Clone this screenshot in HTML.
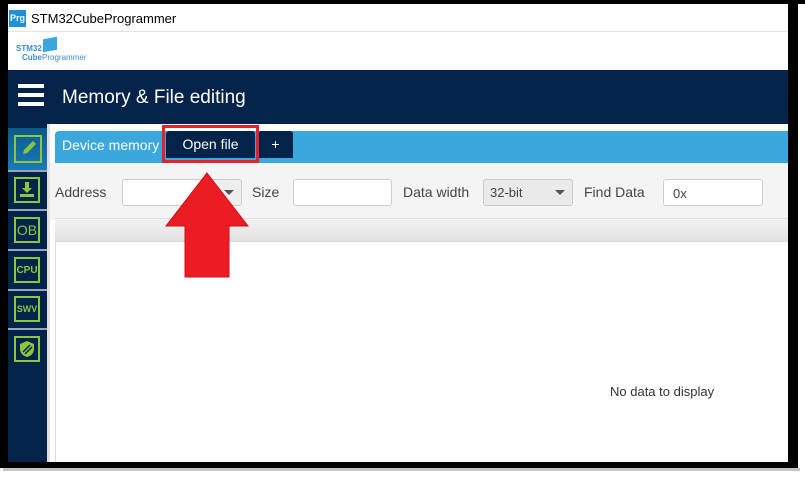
<!DOCTYPE html>
<html><head><style>
*{margin:0;padding:0;box-sizing:border-box}
body{width:805px;height:477px;background:#fff;position:relative;overflow:hidden;font-family:"Liberation Sans",sans-serif}
.a{position:absolute}
.ic{position:absolute;left:14px;width:26px;height:26px;border:2px solid #8cc63f;color:#8cc63f;font-weight:bold;font-size:12px;display:flex;align-items:center;justify-content:center}
.sep{position:absolute;left:8px;width:39px;height:2px;background:#9aa6b8}
.lbl{position:absolute;font-size:14px;color:#444}
.inp{position:absolute;background:#fff;border:1px solid #ccc;border-radius:3px;height:27px}
</style></head><body>
<div class="a" style="left:0;top:0;width:805px;height:4px;background:#000"></div>
<div class="a" style="left:0;top:0;width:8px;height:468px;background:#000"></div>
<div class="a" style="left:788px;top:0;width:10px;height:468px;background:#000"></div>
<div class="a" style="left:0;top:462px;width:798px;height:6px;background:#000"></div>
<div class="a" style="left:3px;top:468px;width:797px;height:3px;background:#888;opacity:.5"></div>
<!-- title bar -->
<div class="a" style="left:9px;top:10px;width:17px;height:17px;background:#1e90d6;color:#fff;font-size:9px;font-weight:bold;line-height:17px;text-align:center">Prg</div>
<div class="a" style="left:31px;top:11px;font-size:13px;color:#000">STM32CubeProgrammer</div>
<div class="a" style="left:8px;top:31px;width:780px;height:1px;background:#e4e4e4"></div>
<div class="a" style="left:16px;top:44px;font-size:8px;color:#3a8fd0;font-weight:bold">STM32</div>
<div class="a" style="left:43px;top:38px;width:14px;height:13px;background:#3aa8dc;transform:skewY(-10deg)"></div>
<div class="a" style="left:22px;top:53px;font-size:8px;color:#3a8fd0"><b>Cube</b>Programmer</div>
<!-- header -->
<div class="a" style="left:8px;top:70px;width:780px;height:54px;background:#03234b"></div>
<div class="a" style="left:18px;top:84px;width:26px;height:4px;background:#fff"></div>
<div class="a" style="left:18px;top:93px;width:26px;height:4px;background:#fff"></div>
<div class="a" style="left:18px;top:102px;width:26px;height:4px;background:#fff"></div>
<div class="a" style="left:62px;top:87px;font-size:19px;color:#fff">Memory &amp; File editing</div>
<!-- sidebar -->
<div class="a" style="left:8px;top:124px;width:39px;height:338px;background:#03234b"></div>
<div class="a" style="left:8px;top:128px;width:39px;height:42px;background:linear-gradient(#0a5a8c,#1a7ab6)"></div>
<div class="ic" style="top:135px;width:28px;height:28px"><svg width="20" height="20" viewBox="0 0 20 20"><path d="M5 15 L6 11 L15 2 L18 5 L9 14 Z" fill="#8cc63f"/></svg></div>
<div class="sep" style="top:170px"></div>
<div class="ic" style="top:177px"><svg width="18" height="18" viewBox="0 0 18 18"><path d="M7 1h4v6h3l-5 5-5-5h3z M2 13h14v3H2z" fill="#8cc63f"/></svg></div>
<div class="sep" style="top:209px"></div>
<div class="ic" style="top:217px;font-size:14px;font-weight:normal">OB</div>
<div class="sep" style="top:249px"></div>
<div class="ic" style="top:257px;font-size:10px">CPU</div>
<div class="sep" style="top:289px"></div>
<div class="ic" style="top:296px;font-size:9px">SWV</div>
<div class="sep" style="top:328px"></div>
<div class="ic" style="top:336px"><svg width="18" height="18" viewBox="0 0 18 18"><path d="M9 1 L16 4 V9 C16 13 13 16 9 17 C5 16 2 13 2 9 V4 Z" fill="#8cc63f"/><path d="M5 12 L12 5 M7 14 L14 7" stroke="#03234b" stroke-width="1.5"/></svg></div>
<!-- content -->
<div class="a" style="left:47px;top:124px;width:3px;height:338px;background:#e0e0e0"></div>
<div class="a" style="left:55px;top:131px;width:733px;height:32px;background:#3aa8dc;border-radius:4px 0 0 0"></div>
<div class="a" style="left:55px;top:157px;width:733px;height:6px;background:#3aa8dc"></div>
<div class="a" style="left:62px;top:137px;font-size:14px;color:#fff">Device memory</div>
<div class="a" style="left:166px;top:131px;width:89px;height:27px;background:#03234b;border-radius:3px 3px 0 0;color:#fff;font-size:14px;text-align:center;line-height:27px">Open file</div>
<div class="a" style="left:258px;top:131px;width:35px;height:27px;background:#03234b;border-radius:3px 3px 0 0;color:#fff;font-size:14px;text-align:center;line-height:27px">+</div>
<div class="a" style="left:162px;top:125px;width:97px;height:38px;border:3px solid #e8202a"></div>
<div class="a" style="left:50px;top:163px;width:738px;height:57px;background:#f4f4f4"></div>
<div class="lbl" style="left:55px;top:184px">Address</div>
<div class="inp" style="left:122px;top:179px;width:120px;background:linear-gradient(90deg,#fff 70%,#eee 70%)"></div>
<div class="a" style="left:224px;top:190px;border:5px solid transparent;border-top:5px solid #555"></div>
<div class="lbl" style="left:252px;top:184px">Size</div>
<div class="inp" style="left:293px;top:179px;width:99px"></div>
<div class="lbl" style="left:403px;top:184px">Data width</div>
<div class="inp" style="left:483px;top:179px;width:90px;background:#eaeaea"></div>
<div class="lbl" style="left:490px;top:185px;font-size:13px">32-bit</div>
<div class="a" style="left:555px;top:190px;border:5px solid transparent;border-top:5px solid #555"></div>
<div class="lbl" style="left:584px;top:184px">Find Data</div>
<div class="inp" style="left:663px;top:179px;width:100px"></div>
<div class="lbl" style="left:673px;top:186px;font-size:13px">0x</div>
<div class="a" style="left:55px;top:218px;width:733px;height:24px;background:linear-gradient(#f2f2f2,#e2e2e2);border-top:1px solid #ddd;border-bottom:1px solid #d8d8d8"></div>
<div class="a" style="left:55px;top:242px;width:1px;height:220px;background:#ddd"></div>
<div class="a" style="left:610px;top:384px;font-size:13px;color:#333">No data to display</div>
<!-- arrow -->
<svg class="a" style="left:160px;top:170px" width="95" height="110"><path d="M47 3 L88 56 L69 56 L69 107 L25 107 L25 56 L6 56 Z" fill="#ec1c24" stroke="#d01018" stroke-width="1"/></svg>
</body></html>
